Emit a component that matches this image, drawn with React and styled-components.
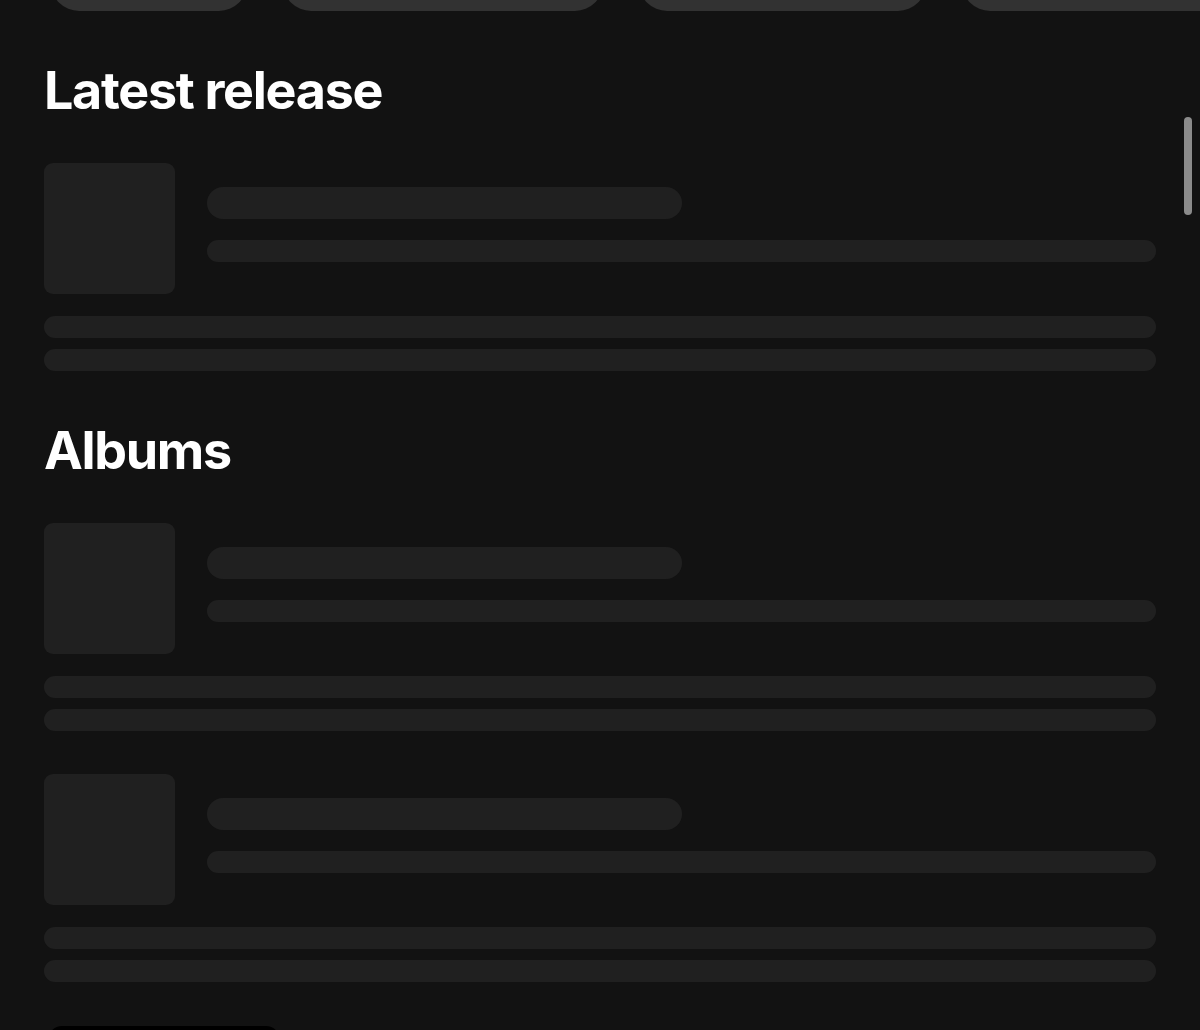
import React from 'react';
import styled, { createGlobalStyle } from 'styled-components';

const GlobalStyle = createGlobalStyle`
  html, body {
    margin: 0;
    padding: 0;
    background: #121212;
    overflow: hidden;
  }
  body {
    font-family: Inter, "Noto Sans", "Liberation Sans", sans-serif;
    color: #fff;
  }
`;

const chips = [196, 320, 287, 280];

function SkeletonItem() {
    return (
        <Item>
            <ItemHead>
                <Cover />
                <Meta>
                    <Bar $width="475px" $height={32} />
                    <Bar $height={22} />
                </Meta>
            </ItemHead>
            <Lines>
                <Bar $height={22} />
                <Bar $height={22} />
            </Lines>
        </Item>
    );
}

export default function App() {
    return (
        <Page>
            <GlobalStyle />
            <ChipRow>
                {chips.map((w, i) => (
                    <Chip key={i} style={{ width: w }} />
                ))}
            </ChipRow>

            <Content>
                <Section>
                    <Heading>Latest release</Heading>
                    <SkeletonItem />
                </Section>

                <Section>
                    <Heading>Albums</Heading>
                    <ItemList>
                        <SkeletonItem />
                        <SkeletonItem />
                    </ItemList>
                </Section>

                <PlayerTab />
            </Content>

            <ScrollThumb />
        </Page>
    );
}

const Page = styled.div`
    position: relative;
    height: 1030px;
    overflow: hidden;
    background: #121212;
`

const ChipRow = styled.div`
    display: flex;
    align-items: flex-end;
    gap: 36px;
    height: 11px;
    padding-left: 51px;
    overflow: hidden;
`

const Chip = styled.div`
    flex: none;
    height: 56px;
    border-radius: 28px;
    background: #323232;
`

const Content = styled.div`
    display: flex;
    flex-direction: column;
    padding: 0 44px;
`

const Section = styled.section`
    display: flex;
    flex-direction: column;
`

const Heading = styled.h2`
    margin: 48px 0 40px;
    font-size: 52px;
    line-height: 64px;
    font-weight: 700;
    letter-spacing: -1.3px;
    color: #ffffff;
`

const ItemList = styled.div`
    display: flex;
    flex-direction: column;
    gap: 43px;
`

const Item = styled.div`
    display: flex;
    flex-direction: column;
    gap: 22px;
`

const ItemHead = styled.div`
    display: flex;
    gap: 32px;
`

const Cover = styled.div`
    flex: none;
    width: 131px;
    height: 131px;
    border-radius: 9px;
    background: #202020;
`

const Meta = styled.div`
    flex: 1;
    display: flex;
    flex-direction: column;
    gap: 21px;
    padding-top: 24px;
`

const Bar = styled.div`
    width: ${p => p.$width || '100%'};
    height: ${p => p.$height}px;
    border-radius: ${p => p.$height / 2}px;
    background: #202020;
`

const Lines = styled.div`
    display: flex;
    flex-direction: column;
    gap: 11px;
`

const PlayerTab = styled.div`
    margin-top: 44px;
    margin-left: 4px;
    width: 232px;
    height: 48px;
    border-radius: 14px;
    background: #000000;
`

const ScrollThumb = styled.div`
    position: absolute;
    top: 117px;
    right: 8px;
    width: 8px;
    height: 98px;
    border-radius: 4px;
    background: #8b8b8b;
`
